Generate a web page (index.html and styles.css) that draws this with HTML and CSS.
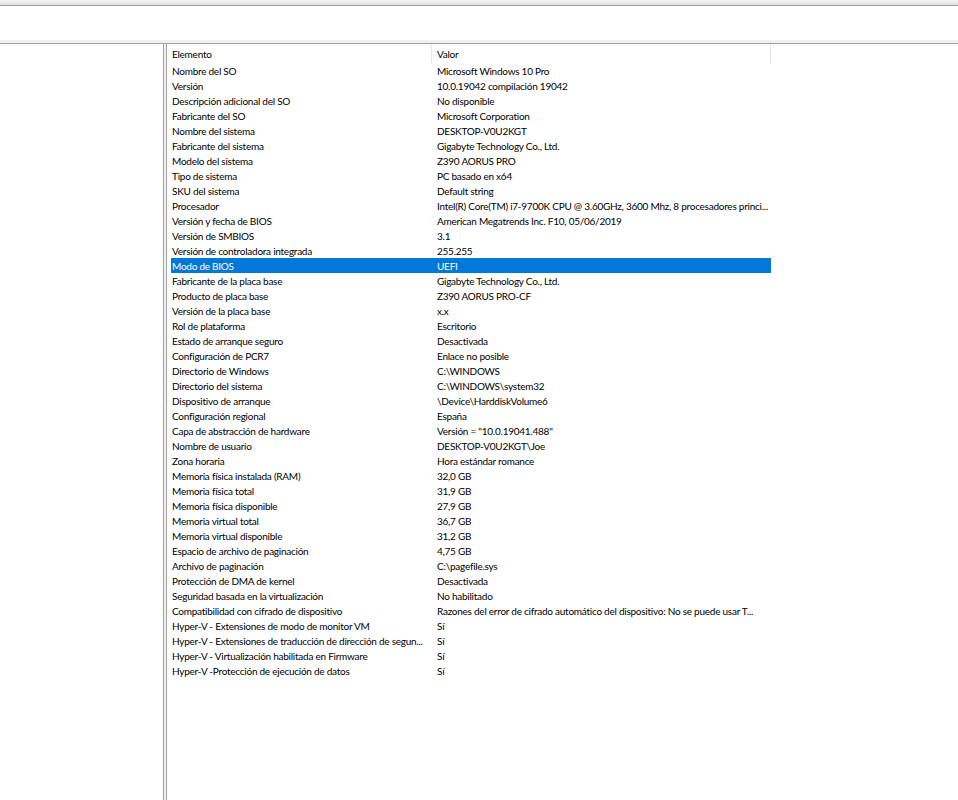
FILE: index.html
```html
<!DOCTYPE html>
<html lang="es">
<head>
<meta charset="utf-8">
<title>Información del sistema</title>
<link rel="stylesheet" href="styles.css">
</head>
<body>
<div class="window">
  <div class="topbar"></div>
  <div class="toolbar"></div>
  <div class="band"></div>
  <div class="main">
    <div class="tree"></div>
    <div class="splitter"></div>
    <div class="list">
      <div class="header">
        <div class="hcell hcell-1">Elemento</div>
        <div class="hcell hcell-2">Valor</div>
      </div>
      <div class="rows">
        <div class="row"><span class="c1">Nombre del SO</span><span class="c2">Microsoft Windows 10 Pro</span></div>
        <div class="row"><span class="c1">Versión</span><span class="c2">10.0.19042 compilación 19042</span></div>
        <div class="row"><span class="c1">Descripción adicional del SO</span><span class="c2">No disponible</span></div>
        <div class="row"><span class="c1">Fabricante del SO</span><span class="c2">Microsoft Corporation</span></div>
        <div class="row"><span class="c1">Nombre del sistema</span><span class="c2">DESKTOP-V0U2KGT</span></div>
        <div class="row"><span class="c1">Fabricante del sistema</span><span class="c2">Gigabyte Technology Co., Ltd.</span></div>
        <div class="row"><span class="c1">Modelo del sistema</span><span class="c2">Z390 AORUS PRO</span></div>
        <div class="row"><span class="c1">Tipo de sistema</span><span class="c2">PC basado en x64</span></div>
        <div class="row"><span class="c1">SKU del sistema</span><span class="c2">Default string</span></div>
        <div class="row"><span class="c1">Procesador</span><span class="c2">Intel(R) Core(TM) i7-9700K CPU @ 3.60GHz, 3600 Mhz, 8 procesadores princi...</span></div>
        <div class="row"><span class="c1">Versión y fecha de BIOS</span><span class="c2">American Megatrends Inc. F10, 05/06/2019</span></div>
        <div class="row"><span class="c1">Versión de SMBIOS</span><span class="c2">3.1</span></div>
        <div class="row"><span class="c1">Versión de controladora integrada</span><span class="c2">255.255</span></div>
        <div class="row selected"><span class="c1">Modo de BIOS</span><span class="c2">UEFI</span></div>
        <div class="row"><span class="c1">Fabricante de la placa base</span><span class="c2">Gigabyte Technology Co., Ltd.</span></div>
        <div class="row"><span class="c1">Producto de placa base</span><span class="c2">Z390 AORUS PRO-CF</span></div>
        <div class="row"><span class="c1">Versión de la placa base</span><span class="c2">x.x</span></div>
        <div class="row"><span class="c1">Rol de plataforma</span><span class="c2">Escritorio</span></div>
        <div class="row"><span class="c1">Estado de arranque seguro</span><span class="c2">Desactivada</span></div>
        <div class="row"><span class="c1">Configuración de PCR7</span><span class="c2">Enlace no posible</span></div>
        <div class="row"><span class="c1">Directorio de Windows</span><span class="c2">C:\WINDOWS</span></div>
        <div class="row"><span class="c1">Directorio del sistema</span><span class="c2">C:\WINDOWS\system32</span></div>
        <div class="row"><span class="c1">Dispositivo de arranque</span><span class="c2">\Device\HarddiskVolume6</span></div>
        <div class="row"><span class="c1">Configuración regional</span><span class="c2">España</span></div>
        <div class="row"><span class="c1">Capa de abstracción de hardware</span><span class="c2">Versión = "10.0.19041.488"</span></div>
        <div class="row"><span class="c1">Nombre de usuario</span><span class="c2">DESKTOP-V0U2KGT\Joe</span></div>
        <div class="row"><span class="c1">Zona horaria</span><span class="c2">Hora estándar romance</span></div>
        <div class="row"><span class="c1">Memoria física instalada (RAM)</span><span class="c2">32,0 GB</span></div>
        <div class="row"><span class="c1">Memoria física total</span><span class="c2">31,9 GB</span></div>
        <div class="row"><span class="c1">Memoria física disponible</span><span class="c2">27,9 GB</span></div>
        <div class="row"><span class="c1">Memoria virtual total</span><span class="c2">36,7 GB</span></div>
        <div class="row"><span class="c1">Memoria virtual disponible</span><span class="c2">31,2 GB</span></div>
        <div class="row"><span class="c1">Espacio de archivo de paginación</span><span class="c2">4,75 GB</span></div>
        <div class="row"><span class="c1">Archivo de paginación</span><span class="c2">C:\pagefile.sys</span></div>
        <div class="row"><span class="c1">Protección de DMA de kernel</span><span class="c2">Desactivada</span></div>
        <div class="row"><span class="c1">Seguridad basada en la virtualización</span><span class="c2">No habilitado</span></div>
        <div class="row"><span class="c1">Compatibilidad con cifrado de dispositivo</span><span class="c2">Razones del error de cifrado automático del dispositivo: No se puede usar T...</span></div>
        <div class="row"><span class="c1">Hyper-V - Extensiones de modo de monitor VM</span><span class="c2">Sí</span></div>
        <div class="row"><span class="c1">Hyper-V - Extensiones de traducción de dirección de segun...</span><span class="c2">Sí</span></div>
        <div class="row"><span class="c1">Hyper-V - Virtualización habilitada en Firmware</span><span class="c2">Sí</span></div>
        <div class="row"><span class="c1">Hyper-V -Protección de ejecución de datos</span><span class="c2">Sí</span></div>
      </div>
    </div>
  </div>
</div>
</body>
</html>
```

FILE: styles.css
```css
html, body {
  margin: 0;
  padding: 0;
  background: #ffffff;
}
body {
  font-family: "Lato", "Noto Sans", sans-serif;
  font-size: 10px;
  letter-spacing: -0.25px;
  color: #000000;
}
.window {
  display: flex;
  flex-direction: column;
  height: 800px;
  overflow: hidden;
}
.topbar {
  height: 5px;
  background: linear-gradient(#f2f2f2, #e2e2e2);
  border-bottom: 1px solid #a0a0a0;
  flex: none;
}
.toolbar {
  height: 34px;
  background: #ffffff;
  flex: none;
}
.band {
  height: 3px;
  background: #f0f0f0;
  border-bottom: 1px solid #a0a0a8;
  flex: none;
}
.main {
  flex: 1;
  display: flex;
  min-height: 0;
}
.tree {
  width: 163px;
  background: #ffffff;
  border-right: 1px solid #a0a0a0;
  flex: none;
}
.splitter {
  width: 2px;
  background: #f0f0f0;
  flex: none;
}
.list {
  flex: 1;
  border-left: 1px solid #a0a0a0;
  background: #ffffff;
  min-width: 0;
}
.header {
  display: flex;
  height: 19px;
}
.hcell {
  height: 19px;
  line-height: 19px;
  padding-left: 5px;
  padding-top: 1px;
  box-sizing: border-box;
  border-right: 1px solid #e5e5e5;
}
.hcell-1 { width: 265px; }
.hcell-2 { width: 339px; }
.rows {
  padding-left: 4px;
}
.row {
  display: flex;
  height: 15px;
  width: 600px;
}
.c1, .c2 {
  white-space: nowrap;
  overflow: hidden;
  box-sizing: border-box;
  height: 15px;
  line-height: 15px;
  padding-top: 1px;
}
.c1 {
  width: 261px;
  padding-left: 1px;
}
.c2 {
  width: 339px;
  padding-left: 5px;
}
.row.selected {
  background: #0078d7;
  color: #ffffff;
}
```
